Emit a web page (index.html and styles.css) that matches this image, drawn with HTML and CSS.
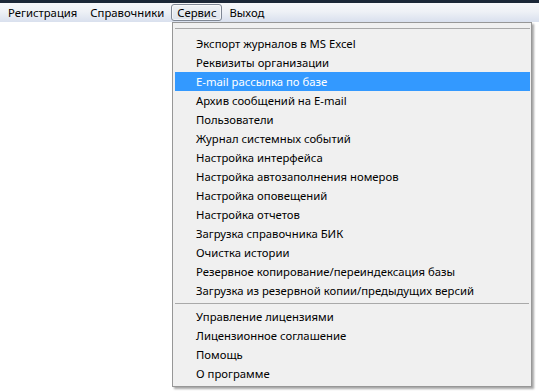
FILE: index.html
```html
<!DOCTYPE html>
<html lang="ru">
<head>
<meta charset="utf-8">
<title>Меню</title>
<link rel="stylesheet" href="styles.css">
</head>
<body>
<div class="topstrip"></div>
<nav class="menubar">
  <span class="mitem">Регистрация</span>
  <span class="mitem">Справочники</span>
  <span class="mitem active">Сервис</span>
  <span class="mitem">Выход</span>
</nav>
<div class="workspace"></div>
<div class="dropdown">
  <div class="sep top"></div>
  <ul class="group">
    <li>Экспорт журналов в MS Excel</li>
    <li>Реквизиты организации</li>
    <li class="hl">E-mail рассылка по базе</li>
    <li>Архив сообщений на E-mail</li>
    <li>Пользователи</li>
    <li>Журнал системных событий</li>
    <li>Настройка интерфейса</li>
    <li>Настройка автозаполнения номеров</li>
    <li>Настройка оповещений</li>
    <li>Настройка отчетов</li>
    <li>Загрузка справочника БИК</li>
    <li>Очистка истории</li>
    <li>Резервное копирование/переиндексация базы</li>
    <li>Загрузка из резервной копии/предыдущих версий</li>
  </ul>
  <div class="sep mid"></div>
  <ul class="group">
    <li>Управление лицензиями</li>
    <li>Лицензионное соглашение</li>
    <li>Помощь</li>
    <li>О программе</li>
  </ul>
</div>
</body>
</html>
```
FILE: styles.css
```css
* { box-sizing: border-box; }
html, body { margin: 0; padding: 0; }
body {
  width: 539px;
  height: 391px;
  background: #ffffff;
  font-family: "Noto Sans", "Open Sans", sans-serif;
  font-size: 11.3px;
  color: #000;
  overflow: hidden;
  position: relative;
}
.topstrip {
  height: 3px;
  background: #1c2838;
}
.menubar {
  height: 19px;
  display: flex;
  align-items: center;
  padding-left: 2px;
  background: linear-gradient(to bottom, #f7f8fa 0%, #eef1f6 45%, #d9e0ee 100%);
}
.mitem {
  padding: 0 5px;
  height: 17px;
  line-height: 15px;
  border: 1px solid transparent;
  margin-right: 1px;
}
.mitem.active {
  border-color: #7f8794;
  border-radius: 3px;
  background: linear-gradient(to bottom, #eef1f5, #dde3ec);
  box-shadow: inset 0 0 0 1px rgba(255,255,255,0.6);
}
.dropdown {
  position: absolute;
  left: 172px;
  top: 22px;
  width: 360px;
  height: 365px;
  background: #f0f0f0;
  border: 1px solid #979797;
  padding: 5px 1px 0 2px;
  box-shadow: 2px 2px 2px rgba(0,0,0,0.35);
}
.sep {
  height: 1px;
  background: #a9a9a9;
}
.sep.top { margin-bottom: 5px; }
.sep.mid { margin: 3px 1px 3px 0; }
.group {
  list-style: none;
  margin: 0;
  padding: 0;
}
.group li {
  height: 19px;
  line-height: 19px;
  padding-left: 21px;
  white-space: nowrap;
}
.group li.hl {
  background: #3399ff;
  color: #ffffff;
}
```
